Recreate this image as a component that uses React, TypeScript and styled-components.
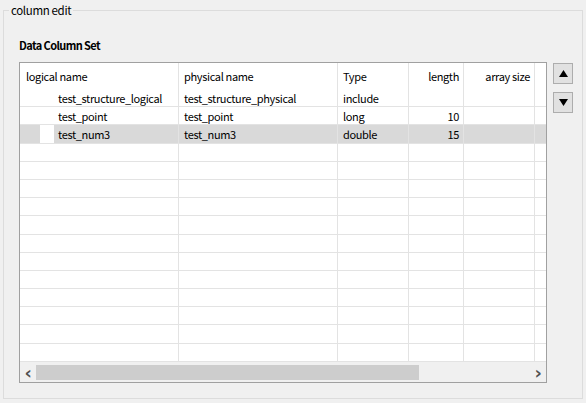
import React from 'react'
import styled, { createGlobalStyle, css } from 'styled-components'

const GlobalStyle = createGlobalStyle`
  html, body {
    margin: 0;
    padding: 0;
    background: #f0f0f0;
    font-family: "Noto Sans CJK KR", "Noto Sans", sans-serif;
    font-size: 11px;
    letter-spacing: -0.35px;
    color: #000;
  }
`

type TRow = {
  logical: string
  physical: string
  type: string
  length: string
  arraySize: string
  selected?: boolean
}

const rows: TRow[] = [
  { logical: 'test_structure_logical', physical: 'test_structure_physical', type: 'include', length: '', arraySize: '' },
  { logical: 'test_point', physical: 'test_point', type: 'long', length: '10', arraySize: '' },
  { logical: 'test_num3', physical: 'test_num3', type: 'double', length: '15', arraySize: '', selected: true },
]

const EMPTY_ROWS = 12
const COLS = '159px 159px 71px 55px 71px 1fr'

const App: React.FC = () => {
  return (
    <>
      <GlobalStyle />
      <StyledPage>
        <StyledGroup>
          <legend>column edit</legend>
          <StyledTitle>Data Column Set</StyledTitle>
          <StyledBody>
            <StyledTable>
              <StyledHeader>
                <StyledCell first>logical name</StyledCell>
                <StyledCell>physical name</StyledCell>
                <StyledCell>Type</StyledCell>
                <StyledCell align='right'>length</StyledCell>
                <StyledCell align='right'>array size</StyledCell>
                <StyledCell last />
              </StyledHeader>
              <StyledRows>
                {rows.map((r, i) => (
                  <StyledRow key={i} selected={r.selected}>
                    <StyledCell indent>
                      {r.selected && <StyledMark />}
                      {r.logical}
                    </StyledCell>
                    <StyledCell>{r.physical}</StyledCell>
                    <StyledCell>{r.type}</StyledCell>
                    <StyledCell align='right'>{r.length}</StyledCell>
                    <StyledCell align='right'>{r.arraySize}</StyledCell>
                    <StyledCell last />
                  </StyledRow>
                ))}
                {Array.from({ length: EMPTY_ROWS }).map((_, i) => (
                  <StyledRow key={'e' + i}>
                    <StyledCell />
                    <StyledCell />
                    <StyledCell />
                    <StyledCell />
                    <StyledCell />
                    <StyledCell last />
                  </StyledRow>
                ))}
              </StyledRows>
              <StyledScrollBar>
                <StyledArrow>‹</StyledArrow>
                <StyledTrack>
                  <StyledThumb />
                </StyledTrack>
                <StyledArrow>›</StyledArrow>
              </StyledScrollBar>
            </StyledTable>
            <StyledSide>
              <StyledMoveBtn>
                <svg width='9' height='7' viewBox='0 0 9 7'>
                  <polygon points='4.5,0 9,7 0,7' fill='#000' />
                </svg>
              </StyledMoveBtn>
              <StyledMoveBtn>
                <svg width='9' height='7' viewBox='0 0 9 7'>
                  <polygon points='0,0 9,0 4.5,7' fill='#000' />
                </svg>
              </StyledMoveBtn>
            </StyledSide>
          </StyledBody>
        </StyledGroup>
      </StyledPage>
    </>
  )
}

export default App

const StyledPage = styled.div`
  width: 586px;
  height: 403px;
  padding: 3px 3px 4px 3px;
  box-sizing: border-box;
`

const StyledGroup = styled.fieldset`
  margin: 0;
  height: 396px;
  box-sizing: border-box;
  border: 1px solid #dcdcdc;
  padding: 0 0 0 15px;
  > legend {
    font-size: 11.5px;
    line-height: 14px;
    padding: 0 2px;
    margin-left: -10px;
  }
`

const StyledTitle = styled.div`
  font-weight: 700;
  font-size: 11px;
  letter-spacing: -0.6px;
  line-height: 16px;
  margin-top: 20px;
`

const StyledBody = styled.div`
  display: flex;
  gap: 6px;
  margin-top: 9px;
`

const StyledTable = styled.div`
  width: 528px;
  height: 321px;
  box-sizing: border-box;
  border: 1px solid #a0a0a0;
  background: #fff;
  display: flex;
  flex-direction: column;
  overflow: hidden;
`

const StyledHeader = styled.div`
  display: grid;
  grid-template-columns: ${COLS};
  height: 26px;
  flex: none;
  > div {
    align-items: flex-start;
    padding-top: 5px;
  }
`

const StyledRows = styled.div`
  flex: 1;
  overflow: hidden;
`

const StyledRow = styled.div<{ selected?: boolean }>`
  display: grid;
  grid-template-columns: ${COLS};
  height: 18.2px;
  box-sizing: border-box;
  border-bottom: 1px solid #e3e3e3;
  ${({ selected }) =>
    selected &&
    css`
      background: #d9d9d9;
    `}
`

const StyledCell = styled.div<{
  align?: 'left' | 'right'
  indent?: boolean
  first?: boolean
  last?: boolean
}>`
  position: relative;
  display: flex;
  align-items: center;
  justify-content: ${({ align }) => (align === 'right' ? 'flex-end' : 'flex-start')};
  padding: ${({ align, indent, first }) =>
    align === 'right'
      ? '0 4px 0 0'
      : indent
        ? '0 0 0 38px'
        : first
          ? '0 0 0 6px'
          : '0 0 0 5px'};
  border-right: ${({ last }) => (last ? 'none' : '1px solid #e3e3e3')};
  white-space: nowrap;
  overflow: hidden;
  line-height: 16px;
`

const StyledMark = styled.span`
  position: absolute;
  left: 20px;
  top: 0;
  bottom: 0;
  width: 14px;
  background: #fff;
`

const StyledScrollBar = styled.div`
  height: 19px;
  flex: none;
  display: flex;
  align-items: center;
  background: #f0f0f0;
  border-top: 1px solid #f0f0f0;
`

const StyledArrow = styled.div`
  width: 16px;
  text-align: center;
  font-size: 18px;
  font-weight: 700;
  line-height: 16px;
  color: #505050;
  font-family: "DejaVu Sans", sans-serif;
`

const StyledTrack = styled.div`
  flex: 1;
  height: 15px;
`

const StyledThumb = styled.div`
  width: 383px;
  height: 100%;
  background: #cdcdcd;
`

const StyledSide = styled.div`
  display: flex;
  flex-direction: column;
  gap: 8px;
  padding-top: 1px;
`

const StyledMoveBtn = styled.button`
  width: 20px;
  height: 21px;
  padding: 0;
  background: #e1e1e1;
  border: 1px solid #adadad;
  display: flex;
  align-items: center;
  justify-content: center;
`
